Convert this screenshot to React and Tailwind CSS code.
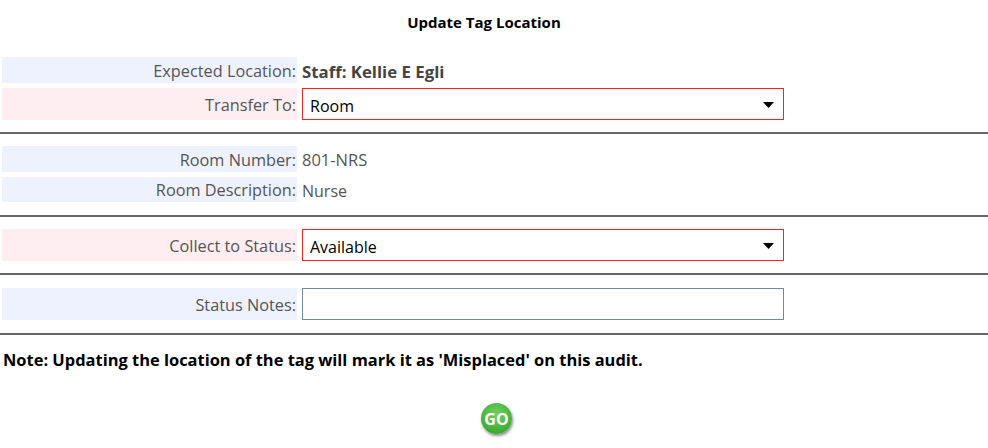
import React from 'react';

function Divider({ className }) {
  return <hr className={`border-0 border-t-2 border-[#666] ${className}`} />;
}

function Label({ pink, className, children }) {
  return (
    <div className={`w-[295px] flex items-center justify-end pr-[1px] text-[16.3px] text-[#555] ${pink ? 'bg-[#ffeef1]' : 'bg-[#eef2ff]'} ${className}`}>
      <span className="translate-y-[1px]">{children}</span>
    </div>
  );
}

function Dropdown({ value, className }) {
  return (
    <div className={`w-[482px] h-[32px] ml-[5px] flex items-center justify-between pl-[7px] pr-[9px] border border-[#ff2020] text-black text-[16px] ${className}`}>
      <span className="translate-y-[2px]">{value}</span>
      <svg width="11" height="6" viewBox="0 0 11 6" className="translate-y-[1px]"><path d="M0 0h11L5.5 6z" fill="#000" /></svg>
    </div>
  );
}

export default function App() {
  return (
    <div className="w-[988px] h-[448px] bg-white overflow-hidden text-[16px] font-['Open_Sans','Noto_Sans',sans-serif]">
      <h1 className="pt-[12px] pr-[20px] h-[57px] text-center text-[15px] leading-[20px] font-bold text-black">Update Tag Location</h1>

      <div className="flex pl-[2px] h-[26px]">
        <Label>Expected Location:</Label>
        <div className="ml-[5px] flex items-center font-bold text-[16.8px] text-[#444] translate-y-[2px]">Staff: Kellie E Egli</div>
      </div>
      <div className="flex pl-[2px] mt-[5px]">
        <Label pink>Transfer To:</Label>
        <Dropdown value="Room" />
      </div>

      <Divider className="mt-[12px]" />

      <div className="flex pl-[2px] h-[26px] mt-[12px]">
        <Label>Room Number:</Label>
        <div className="ml-[5px] flex items-center text-[16.5px] text-[#555] translate-y-[1px]">801-NRS</div>
      </div>
      <div className="flex pl-[2px] h-[25px] mt-[5px]">
        <Label>Room Description:</Label>
        <div className="ml-[5px] flex items-center text-[#555] translate-y-[1px]">Nurse</div>
      </div>

      <Divider className="mt-[13px]" />

      <div className="flex pl-[2px] mt-[12px]">
        <Label pink>Collect to Status:</Label>
        <Dropdown value="Available" />
      </div>

      <Divider className="mt-[12px]" />

      <div className="flex pl-[2px] mt-[13px]">
        <Label>Status Notes:</Label>
        <input className="w-[482px] h-[32px] ml-[5px] border border-[#7288a8] outline-none" />
      </div>

      <Divider className="mt-[13px]" />

      <p className="pl-[3px] mt-[14px] leading-[22px] font-bold text-[16.45px] text-black">
        Note: Updating the location of the tag will mark it as 'Misplaced' on this audit.
      </p>

      <div className="flex justify-center pl-[5px] mt-[32px]">
        <button className="w-[31px] h-[31px] rounded-full bg-[radial-gradient(circle_at_50%_35%,#74d062,#46b43b_60%,#2f9429)] shadow-[1px_2px_3px_rgba(0,0,0,0.45)] flex items-center justify-center text-white text-[16px] leading-none font-bold">
          GO
        </button>
      </div>
    </div>
  );
}
